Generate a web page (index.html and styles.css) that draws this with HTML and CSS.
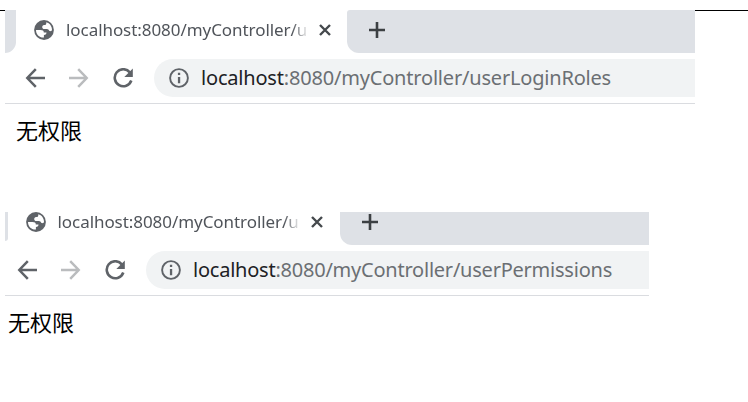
FILE: index.html
```html
<!DOCTYPE html>
<html lang="zh">
<head>
<meta charset="utf-8">
<title>localhost:8080</title>
<link rel="stylesheet" href="styles.css">
</head>
<body>
<svg class="defs" width="0" height="0">
  <symbol id="globe" viewBox="0 0 20 20"><circle cx="10" cy="10" r="9.900" fill="#5f6368"/><path d="M2 10h4.500c2.300 0 3.300.8 3.300 2.400h2.700c0 1.600-.8 2.500-2.600 2.500v2.700C5.500 17.900 1.900 14.600 2 10z" fill="#fff"/><path d="M12.300 2.300c3.500.9 5.700 4 5.700 7.700-.5 1.300-2 1.500-2.800.7-.6-.7-.9-1.600-2.400-1.600h-2.300c-3 0-3-3.900-.4-4.100h1c1 0 1.200-.9 1.200-2.700z" fill="#fff"/></symbol>
  <symbol id="back" viewBox="0 0 20 20"><path d="M20 10H2.500M10.800 1.200 2.300 10l8.500 8.800" fill="none" stroke="currentColor" stroke-width="2.500"/></symbol>
  <symbol id="reload" viewBox="0 0 20 20"><path d="M16.800 4.300A8.500 8.500 0 1 0 18.300 12.500" fill="none" stroke="#5f6368" stroke-width="2.600"/><path d="M19.800.5v8.500h-8.500z" fill="#5f6368"/></symbol>
  <symbol id="info" viewBox="0 0 20 20"><circle cx="10" cy="10" r="8.900" fill="none" stroke="#5f6368" stroke-width="1.900"/><path d="M8.900 4.800h2.300v2.300H8.900zM8.900 8.900h2.300V15.200H8.900z" fill="#5f6368"/></symbol>
  <symbol id="close" viewBox="0 0 12 12"><path d="m1 1 10 10M11 1 1 11" stroke="#45494d" stroke-width="2.400"/></symbol>
  <symbol id="plus" viewBox="0 0 16 16"><path d="M8 0v16M0 8h16" stroke="#3c4043" stroke-width="2.600"/></symbol>
</svg>
<hr class="rule">
<section class="shot first">
  <div class="tabs">
    <div class="edge"></div>
    <div class="tab"><svg class="icon"><use href="#globe"/></svg><span class="title">localhost:8080/myController/u</span><svg class="close"><use href="#close"/></svg></div>
    <div class="strip"><svg class="plus"><use href="#plus"/></svg></div>
  </div>
  <div class="toolbar">
    <svg class="icon back"><use href="#back"/></svg>
    <svg class="icon forward"><use href="#back"/></svg>
    <svg class="icon"><use href="#reload"/></svg>
    <div class="address"><svg class="icon"><use href="#info"/></svg><span class="url"><b>localhost</b>:8080/myController/userLoginRoles</span></div>
  </div>
  <div class="page">无权限</div>
</section>
<section class="shot second">
  <div class="tabs">
    <div class="edge"></div>
    <div class="tab"><svg class="icon"><use href="#globe"/></svg><span class="title">localhost:8080/myController/u</span><svg class="close"><use href="#close"/></svg></div>
    <div class="strip"><svg class="plus"><use href="#plus"/></svg></div>
  </div>
  <div class="toolbar">
    <svg class="icon back"><use href="#back"/></svg>
    <svg class="icon forward"><use href="#back"/></svg>
    <svg class="icon"><use href="#reload"/></svg>
    <div class="address"><svg class="icon"><use href="#info"/></svg><span class="url"><b>localhost</b>:8080/myController/userPermissions</span></div>
  </div>
  <div class="page">无权限</div>
</section>
</body>
</html>
```

FILE: styles.css
```css
* { box-sizing: border-box; }
body { margin: 0; padding-top: 10px; background: #fff; font-family: "Noto Sans", "Noto Sans CJK SC", sans-serif; overflow: hidden; }
.defs { display: none; }
.rule { height: 1px; margin: 0 0 -1px; border: 0; background: #000; }
.shot { position: relative; margin-left: 5px; background: #fff; }
.first { width: 690px; height: 202px; }
.second { width: 644px; height: 180px; }
.tabs { display: flex; height: 43px; }
.second .tabs { height: 33px; }
.edge { width: 11px; background: #dee1e6; border-radius: 0 0 11px 0; }
.second .edge { width: 3px; height: 29px; border-radius: 0 0 3px 0; }
.tab { display: flex; width: 331px; height: 39px; align-items: center; padding-left: 18px; }
.second .tab { width: 332px; height: 20px; padding-left: 17.5px; }
.icon { flex: none; width: 20px; height: 20px; }
.title { width: 243px; margin-left: 12px; overflow: hidden; white-space: nowrap; font-size: 17px; line-height: 24px; letter-spacing: -.06px; color: #50545a; -webkit-mask-image: linear-gradient(to right, #000 226px, transparent 243px); mask-image: linear-gradient(to right, #000 226px, transparent 243px); }
.close { width: 12px; height: 12px; margin-left: 10px; }
.strip { flex: 1; padding: 12px 0 0 22px; background: #dee1e6; border-radius: 3px 0 0 12px; }
.second .strip { padding-top: 2px; border-top-left-radius: 0; }
.plus { display: block; width: 16px; height: 16px; }
.toolbar { display: flex; align-items: center; height: 51px; padding-left: 20px; border-bottom: 1px solid #dadce0; }
.second .toolbar { padding-left: 12px; }
.toolbar > .icon { margin-right: 24px; }
.back { color: #5f6368; }
.forward { color: #babcbe; transform: scaleX(-1); }
.toolbar > .address { flex: 1; display: flex; align-items: center; height: 38px; margin-left: -3px; padding-left: 15px; background: #f1f3f4; border-radius: 19px 0 0 19px; }
.url { margin-left: 12px; white-space: nowrap; font-size: 20px; line-height: 28px; letter-spacing: -.19px; color: #6b6f73; }
.second .url { letter-spacing: -.23px; }
.url b { color: #202124; font-weight: 400; }
.page { padding: 9px 0 0 11px; font-family: "Noto Sans CJK SC", sans-serif; font-size: 22px; line-height: 32px; color: #000; }
.second .page { padding-left: 3px; }
```
